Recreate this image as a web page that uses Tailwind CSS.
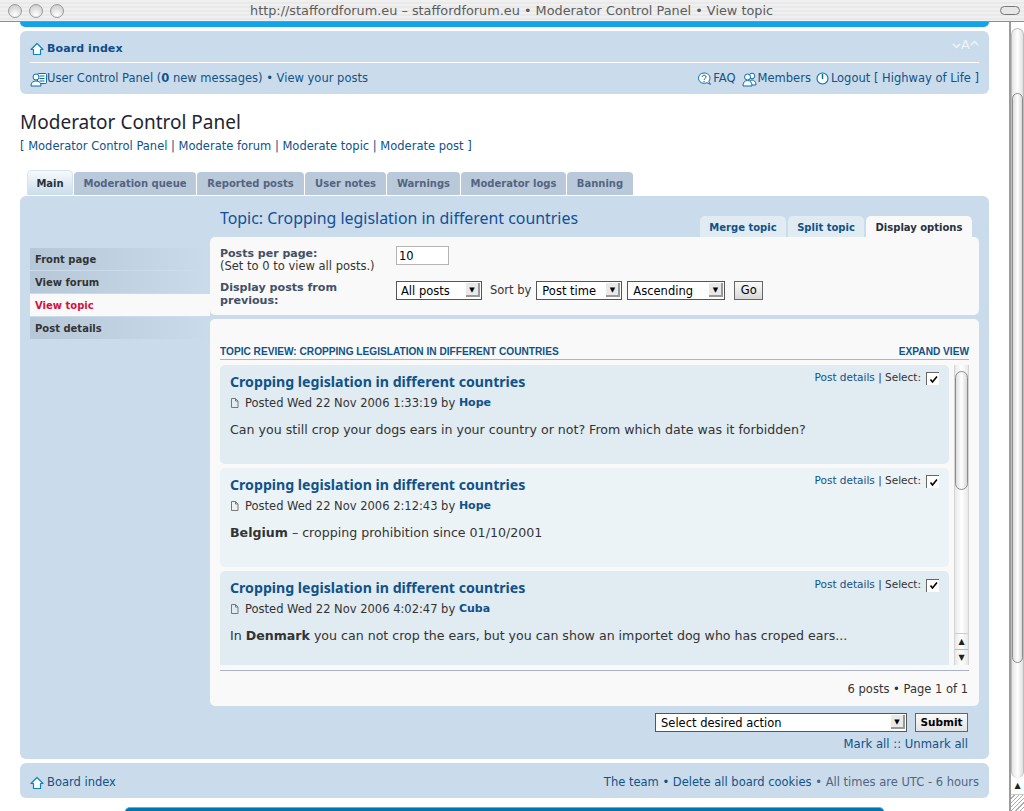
<!DOCTYPE html>
<html lang="en">
<head>
  <meta charset="UTF-8">
  <title>Moderator Control Panel</title>
  <script src="https://cdn.jsdelivr.net/npm/@tailwindcss/browser@4"></script>
</head>
<body class="bg-white h-[811px] overflow-hidden font-['DejaVu_Sans',sans-serif] text-[11.5px] text-[#333]">

  <!-- window title bar -->
  <header class="h-[22px] flex items-center bg-[repeating-linear-gradient(#f0f0f0_0,#f0f0f0_2px,#e9e9e9_2px,#e9e9e9_4px)] border-b border-[#8e8e8e]">
    <div class="flex gap-[7px] pl-[8px] w-[220px]">
      <span class="w-[14px] h-[14px] rounded-full border border-[#9a9a9a] bg-[radial-gradient(circle_at_50%_80%,#fff,#c4c4c4)]"></span>
      <span class="w-[14px] h-[14px] rounded-full border border-[#9a9a9a] bg-[radial-gradient(circle_at_50%_80%,#fff,#c4c4c4)]"></span>
      <span class="w-[14px] h-[14px] rounded-full border border-[#9a9a9a] bg-[radial-gradient(circle_at_50%_80%,#fff,#c4c4c4)]"></span>
    </div>
    <div class="flex-1 pl-[30px] text-[12.85px] text-[#5c5c5c] whitespace-nowrap">http://staffordforum.eu – staffordforum.eu • Moderator Control Panel • View topic</div>
    <span class="w-[20px] h-[9px] mr-[4px] rounded-full border border-[#777] bg-[#e6e6e6]"></span>
  </header>

  <div class="flex h-[789px]">
    <!-- page -->
    <div class="w-[1009px] overflow-hidden pl-[20px] pr-[20px]">
      <div class="h-[5px] bg-[#12a3e8] rounded-b-[5px]"></div>

      <nav class="mt-[4px] h-[63px] bg-[#cadceb] rounded-[6px] px-[10px] text-[#105289]">
        <div class="h-[32px] flex items-center justify-between border-b border-white pt-[5px]">
          <a class="flex items-center gap-[3px] font-bold text-[11px] text-[#0f4d8a] tracking-[0.1px]">
            <svg class="w-[14px] h-[14px]" viewBox="0 0 14 14"><path d="M7 1.500 13 7.500H10.500V12.500H3.500V7.500H1Z" fill="#fff" stroke="#0a85c4" stroke-width="1.200" stroke-linejoin="round"/></svg>
            Board index
          </a>
          <span class="flex items-center mb-[9px] text-[13px] text-[#eef4fa] leading-none">
            <svg class="w-[9px] h-[6px] mt-[2px]" viewBox="0 0 9 6" fill="none" stroke="#eef4fa" stroke-width="1.500"><path d="M1 1 4.500 4.500 8 1"/></svg>
            A
            <svg class="w-[9px] h-[6px] mb-[3px]" viewBox="0 0 9 6" fill="none" stroke="#eef4fa" stroke-width="1.500"><path d="M1 5 4.500 1.500 8 5"/></svg>
          </span>
        </div>
        <div class="h-[30px] flex items-center justify-between pt-[2px]">
          <div class="flex items-center">
            <svg class="w-[17px] h-[15px]" viewBox="0 0 17 15" fill="#fff" stroke="#0a6fa8" stroke-width="1"><rect x="7.500" y="1.500" width="9" height="10" rx="1"/><path d="M9.500 4h5M9.500 6.500h5M9.500 9h5" fill="none"/><circle cx="6" cy="5" r="3"/><path d="M1 14c0-3.500 2-5 5-5s5 1.500 5 5z"/></svg>
            <span>User Control Panel (<b>0</b> new messages) • View your posts</span>
          </div>
          <div class="flex items-center">
            <svg class="w-[15px] h-[14px]" viewBox="0 0 15 14" fill="#fff" stroke="#0a6fa8"><path d="M7 1c3.500 0 6 2.300 6 5.200 0 1.300-.5 2.400-1.300 3.200l1.800 3-3.500-1.700c-.9.400-1.900.6-3 .6-3.300 0-5.500-2.300-5.500-5.100S3.500 1 7 1z"/><path d="M5.200 5c0-2.300 3.800-2.300 3.800 0 0 1.500-1.900 1.400-1.900 2.800M7.100 9v1" fill="none" stroke="#105289"/></svg>
            <span class="ml-[1px]">FAQ</span>
            <svg class="w-[15px] h-[15px] ml-[6px]" viewBox="0 0 15 15" fill="#fff" stroke="#0a6fa8"><circle cx="10" cy="4" r="2.800"/><path d="M7 13c0-3 1-5 3-5s4 1.500 4 5z"/><circle cx="5.500" cy="5" r="3"/><path d="M1 14c0-3.500 1.500-5.500 4.500-5.500S10 10.500 10 14z"/></svg>
            <span class="ml-[1px]">Members</span>
            <svg class="w-[13px] h-[13px] ml-[5px] mb-[2px]" viewBox="0 0 13 13" fill="#fff" stroke="#0a6fa8" stroke-width="1.100"><circle cx="6.500" cy="6.500" r="5.500"/><path d="M6.500 2v5" stroke-width="1.500"/></svg>
            <span class="ml-[2px]">Logout [ Highway of Life ]</span>
          </div>
        </div>
      </nav>

      <h2 class="mt-[16px] h-[24px] leading-[24px] text-[19px] text-[#1e2530] font-['Noto_Sans',sans-serif]">Moderator Control Panel</h2>
      <p class="mt-[5px] h-[14px] leading-[14px] text-[#105289]">[ Moderator Control Panel | Moderate forum | Moderate topic | Moderate post ]</p>

      <!-- main tabs -->
      <div class="mt-[17px] pl-[7px] h-[25px] flex items-end gap-[1px] font-bold text-[10px] text-[#536482]">
        <a class="w-[46px] h-[25px] leading-[25px] text-center rounded-t-[5px] text-[#28313f] border border-b-0 border-[#d5e1ec] bg-[linear-gradient(#f7f9fb,#cadceb)]">Main</a>
        <a class="w-[122px] h-[23px] leading-[23px] text-center rounded-t-[4px] bg-[#b9c9d9]">Moderation queue</a>
        <a class="w-[107px] h-[23px] leading-[23px] text-center rounded-t-[4px] bg-[#b9c9d9]">Reported posts</a>
        <a class="w-[81px] h-[23px] leading-[23px] text-center rounded-t-[4px] bg-[#b9c9d9]">User notes</a>
        <a class="w-[73px] h-[23px] leading-[23px] text-center rounded-t-[4px] bg-[#b9c9d9]">Warnings</a>
        <a class="w-[105px] h-[23px] leading-[23px] text-center rounded-t-[4px] bg-[#b9c9d9]">Moderator logs</a>
        <a class="w-[66px] h-[23px] leading-[23px] text-center rounded-t-[4px] bg-[#b9c9d9]">Banning</a>
      </div>

      <!-- main panel -->
      <section class="mt-[1px] h-[563px] bg-[#cadceb] rounded-[6px] flex pl-[10px] pr-[10px]">
        <!-- side menu -->
        <ul class="w-[180px] pt-[52px] flex flex-col gap-[1px] font-bold text-[10px] text-[#333]">
          <li class="h-[22px] leading-[24px] pl-[5px] bg-[linear-gradient(90deg,#b6c8d8,#cadceb)]">Front page</li>
          <li class="h-[22px] leading-[24px] pl-[5px] bg-[linear-gradient(90deg,#b6c8d8,#cadceb)]">View forum</li>
          <li class="h-[22px] leading-[24px] pl-[5px] bg-[#f9f9f9] text-[#d31141]">View topic</li>
          <li class="h-[22px] leading-[24px] pl-[5px] bg-[linear-gradient(90deg,#b6c8d8,#cadceb)]">Post details</li>
        </ul>

        <div class="w-[769px]">
          <!-- heading and sub tabs -->
          <div class="h-[41px] flex justify-between pl-[10px] pr-[7px]">
            <h3 class="pt-[10px] leading-[24px] text-[15.9px] text-[#115098] font-['Noto_Sans',sans-serif]">Topic: Cropping legislation in different countries</h3>
            <div class="flex items-end gap-[2px] font-bold text-[10px] text-[#105289]">
              <a class="w-[86px] h-[21px] leading-[24px] text-center rounded-t-[5px] bg-[#e1ebf2]">Merge topic</a>
              <a class="w-[76px] h-[21px] leading-[24px] text-center rounded-t-[5px] bg-[#e1ebf2]">Split topic</a>
              <a class="w-[106px] h-[21px] leading-[24px] text-center rounded-t-[5px] bg-[#f9f9f9] text-[#28313f]">Display options</a>
            </div>
          </div>

          <!-- display options -->
          <form class="h-[78px] bg-[#f9f9f9] rounded-[5px] pl-[10px] pt-[9px] text-[#333]">
            <div class="flex">
              <div class="w-[176px] pt-[1px] leading-[13px]"><b class="text-[11px] text-[#425067]">Posts per page:</b><br>(Set to 0 to view all posts.)</div>
              <input value="10" class="w-[53px] h-[19px] bg-white border border-[#b4b4b4] px-[2px] text-black">
            </div>
            <div class="flex mt-[8px] items-start">
              <b class="w-[176px] leading-[13px] text-[11.1px] text-[#425067]">Display posts from previous:</b>
              <div class="flex items-center">
                <span class="relative w-[86px] h-[19px] flex items-center pl-[4px] pt-[2px] border border-[#555] bg-white text-black">All posts<i class="absolute right-[1px] top-[1px] w-[14px] h-[14px] border-r-2 border-b-2 border-[#999] bg-[#e9e9e9] text-[7px] not-italic text-center leading-[14px]">▼</i></span>
                <span class="ml-[8px] text-[#333]">Sort by</span>
                <span class="relative ml-[5px] w-[86px] h-[19px] flex items-center pl-[5px] pt-[2px] border border-[#555] bg-white text-black">Post time<i class="absolute right-[1px] top-[1px] w-[14px] h-[14px] border-r-2 border-b-2 border-[#999] bg-[#e9e9e9] text-[7px] not-italic text-center leading-[14px]">▼</i></span>
                <span class="relative ml-[5px] w-[98px] h-[19px] flex items-center pl-[5px] pt-[2px] border border-[#555] bg-white text-black">Ascending<i class="absolute right-[1px] top-[1px] w-[14px] h-[14px] border-r-2 border-b-2 border-[#999] bg-[#e9e9e9] text-[7px] not-italic text-center leading-[14px]">▼</i></span>
                <button type="button" class="ml-[9px] w-[29px] h-[19px] border border-[#666] bg-[linear-gradient(#fafafa,#d8d8d8)] text-black">Go</button>
              </div>
            </div>
          </form>

          <!-- topic review -->
          <div class="mt-[4px] h-[387px] bg-[#f9f9f9] rounded-[5px] px-[10px]">
            <div class="h-[41px] flex items-end justify-between border-b border-[#a9b4c6] font-['Liberation_Sans',sans-serif] font-bold text-[10.15px] text-[#105289]">
              <span>TOPIC REVIEW: CROPPING LEGISLATION IN DIFFERENT COUNTRIES</span>
              <span>EXPAND VIEW</span>
            </div>

            <div class="mt-[5px] h-[300px] flex justify-between overflow-hidden">
              <div class="w-[729px] flex flex-col gap-[4px]">
                <article class="shrink-0 h-[99px] bg-[#e1ebf2] rounded-[5px] pl-[10px] relative">
                  <h4 class="pt-[7px] leading-[20px] text-[14.15px] font-bold text-[#105289] font-['Noto_Sans',sans-serif]">Cropping legislation in different countries</h4>
                  <p class="mt-[4px] leading-[14px] flex items-center">
                    <svg class="w-[9px] h-[10px] mr-[6px]" viewBox="0 0 9 10" fill="none" stroke="#777"><path d="M1.500.5h4l2.500 2.500v6.500h-6.500zM5.500.5v2.500h2.500"/></svg>
                    Posted Wed 22 Nov 2006 1:33:19 by&nbsp;<b class="text-[11px] text-[#105289]">Hope</b></p>
                  <p class="mt-[12px] text-[12.6px] leading-[16px] text-[#333]">Can you still crop your dogs ears in your country or not? From which date was it forbidden?</p>
                  <div class="absolute right-[10px] top-[5px] flex items-center gap-[5px] text-[10.5px]"><span><span class="text-[#105289]">Post details</span> | Select:</span><span class="w-[13px] h-[13px] mt-[2px] bg-white border-l border-t border-[#666] flex items-center justify-center"><svg class="w-[9px] h-[9px]" viewBox="0 0 9 9" fill="none" stroke="#000" stroke-width="1.600"><path d="M1.500 4.500 3.500 7 8 1.500"/></svg></span></div>
                </article>
                <article class="shrink-0 h-[99px] bg-[#ecf3f7] rounded-[5px] pl-[10px] relative">
                  <h4 class="pt-[7px] leading-[20px] text-[14.15px] font-bold text-[#105289] font-['Noto_Sans',sans-serif]">Cropping legislation in different countries</h4>
                  <p class="mt-[4px] leading-[14px] flex items-center">
                    <svg class="w-[9px] h-[10px] mr-[6px]" viewBox="0 0 9 10" fill="none" stroke="#777"><path d="M1.500.5h4l2.500 2.500v6.500h-6.500zM5.500.5v2.500h2.500"/></svg>
                    Posted Wed 22 Nov 2006 2:12:43 by&nbsp;<b class="text-[11px] text-[#105289]">Hope</b></p>
                  <p class="mt-[12px] text-[12.6px] leading-[16px] text-[#333]"><b>Belgium</b> – cropping prohibition since 01/10/2001</p>
                  <div class="absolute right-[10px] top-[5px] flex items-center gap-[5px] text-[10.5px]"><span><span class="text-[#105289]">Post details</span> | Select:</span><span class="w-[13px] h-[13px] mt-[2px] bg-white border-l border-t border-[#666] flex items-center justify-center"><svg class="w-[9px] h-[9px]" viewBox="0 0 9 9" fill="none" stroke="#000" stroke-width="1.600"><path d="M1.500 4.500 3.500 7 8 1.500"/></svg></span></div>
                </article>
                <article class="shrink-0 h-[98px] bg-[#e1ebf2] rounded-t-[5px] pl-[10px] relative">
                  <h4 class="pt-[7px] leading-[20px] text-[14.15px] font-bold text-[#105289] font-['Noto_Sans',sans-serif]">Cropping legislation in different countries</h4>
                  <p class="mt-[4px] leading-[14px] flex items-center">
                    <svg class="w-[9px] h-[10px] mr-[6px]" viewBox="0 0 9 10" fill="none" stroke="#777"><path d="M1.500.5h4l2.500 2.500v6.500h-6.500zM5.500.5v2.500h2.500"/></svg>
                    Posted Wed 22 Nov 2006 4:02:47 by&nbsp;<b class="text-[11px] text-[#105289]">Cuba</b></p>
                  <p class="mt-[12px] text-[12.6px] leading-[16px] text-[#333]">In <b>Denmark</b> you can not crop the ears, but you can show an importet dog who has croped ears...</p>
                  <div class="absolute right-[10px] top-[6px] flex items-center gap-[5px] text-[10.5px]"><span><span class="text-[#105289]">Post details</span> | Select:</span><span class="w-[13px] h-[13px] mt-[1px] bg-white border-l border-t border-[#666] flex items-center justify-center"><svg class="w-[9px] h-[9px]" viewBox="0 0 9 9" fill="none" stroke="#000" stroke-width="1.600"><path d="M1.500 4.500 3.500 7 8 1.500"/></svg></span></div>
                </article>
              </div>

              <!-- inner scrollbar -->
              <div class="w-[15px] h-[300px] flex flex-col border-x border-[#d4d4d4] bg-[linear-gradient(90deg,#e8e8e8,#fff_50%,#e8e8e8)]">
                <div class="h-[6px]"></div>
                <div class="h-[119px] rounded-full border border-[#8c8c8c] bg-[linear-gradient(90deg,#ddd,#fff_50%,#d8d8d8)]"></div>
                <div class="flex-1"></div>
                <div class="h-[32px] text-[8px] text-center text-[#222] leading-[15px] border-t border-[#ccc]">▲<div class="border-t border-[#bbb]">▼</div></div>
              </div>
            </div>

            <div class="mt-[5px] h-[38px] border-t border-[#a9b4c6] flex items-center justify-end pr-[1px] text-[#333]">6 posts • Page 1 of 1</div>
          </div>

          <!-- action select -->
          <div class="mt-[7px] flex justify-end items-center pr-[11px]">
            <span class="relative w-[252px] h-[19px] flex items-center pl-[5px] pt-[2px] border border-[#555] bg-white text-black">Select desired action<i class="absolute right-[1px] top-[1px] w-[14px] h-[14px] border-r-2 border-b-2 border-[#999] bg-[#e9e9e9] text-[7px] not-italic text-center leading-[14px]">▼</i></span>
            <button type="button" class="ml-[8px] w-[53px] h-[19px] border border-[#666] bg-[linear-gradient(#fafafa,#e4e4e4)] font-bold text-[10.5px] text-black">Submit</button>
          </div>
          <div class="mt-[5px] pr-[11px] text-right leading-[14px] text-[11.65px] text-[#105289]">Mark all :: Unmark all</div>
        </div>
      </section>

      <!-- footer nav -->
      <footer class="mt-[4px] h-[35px] bg-[#cadceb] rounded-[6px] px-[10px] pt-[4px] flex items-center justify-between text-[#105289]">
        <a class="flex items-center gap-[3px]">
          <svg class="w-[14px] h-[14px]" viewBox="0 0 14 14"><path d="M7 1.500 13 7.500H10.500V12.500H3.500V7.500H1Z" fill="#fff" stroke="#0a85c4" stroke-width="1.200" stroke-linejoin="round"/></svg>
          Board index
        </a>
        <span>The team • Delete all board cookies <span class="text-[#536482]">• All times are UTC - 6 hours</span></span>
      </footer>

      <div class="mt-[9px] mx-[105px] h-[5px] rounded-t-[5px] bg-[#0076b1] border-t border-[#4fb8ea]"></div>
    </div>

    <!-- window scrollbar -->
    <aside class="w-[15px] border-l-2 border-[#9c9c9c] flex flex-col pt-[6px]">
      <div class="h-[750px] rounded-t-full rounded-b-full border-x border-t border-[#bdbdbd] bg-[linear-gradient(90deg,#e4e4e4,#fff_50%,#e0e0e0)] pt-[64px]">
        <div class="h-[570px] rounded-full border border-[#8c8c8c] bg-[linear-gradient(90deg,#ddd,#fff_50%,#d8d8d8)]"></div>
      </div>
      <div class="h-[17px] text-[8px] text-center text-[#222] leading-[15px] border-b border-[#ccc]">▲</div>
      <div class="h-[16px] bg-[repeating-linear-gradient(135deg,#fff_0,#fff_2px,#aaa_2px,#aaa_3px)]"></div>
    </aside>
  </div>
</body>
</html>
